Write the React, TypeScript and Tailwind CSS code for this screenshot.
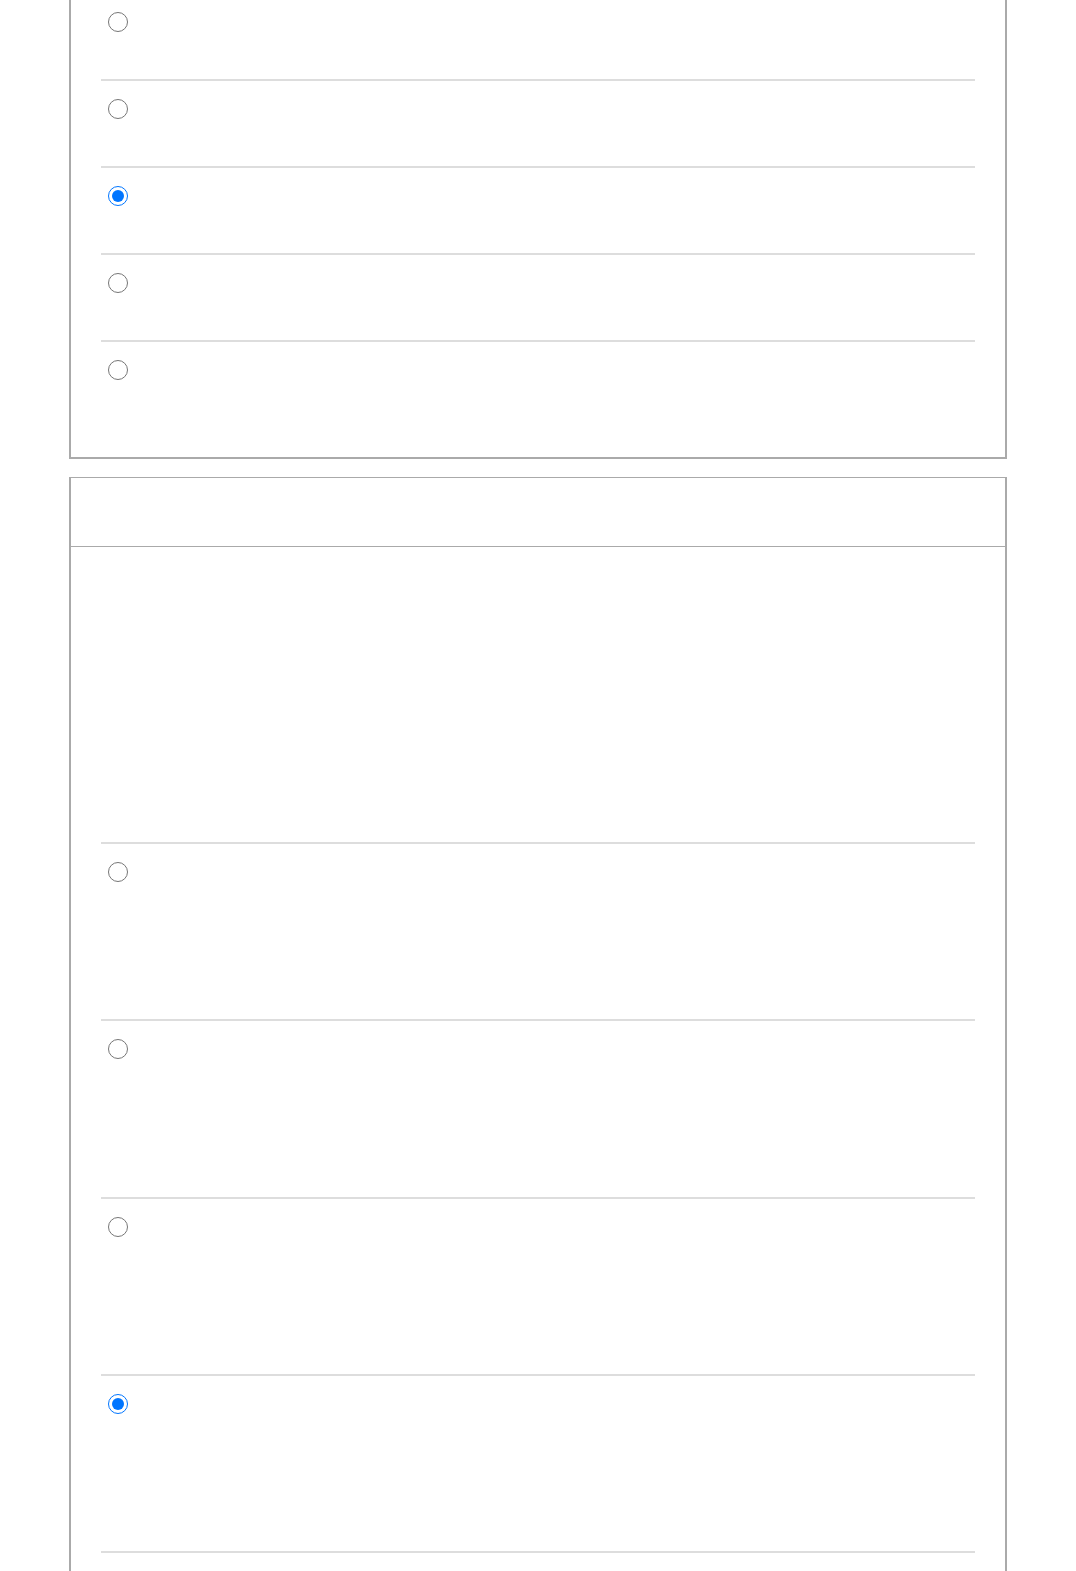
export default function App() {
  const first = [false, false, true, false, false]
  const second = [false, false, false, true, false]

  return (
    <div className="min-h-screen bg-white pb-10" style={{ fontFamily: '"Liberation Sans", Arial, sans-serif' }}>
      {/* Panel 1 (scrolled, top is out of view) */}
      <div className="w-[938px] mx-auto -mt-[8px] border-x-2 border-b-2 border-[#aaaaaa] bg-white px-[30px] pb-[30px]">
        {first.map((checked, i) => (
          <label key={i} className="block h-[87px] border-t-2 border-[#dddddd] pt-[18px] pl-[7px]">
            <input type="radio" name="q1" defaultChecked={checked} className="block w-5 h-5 m-0 accent-[#0075ff]" />
          </label>
        ))}
      </div>

      {/* Panel 2 */}
      <div className="w-[938px] mx-auto mt-[18px] border-x-2 border-t border-[#aaaaaa] bg-white">
        <div className="h-[69px] border-b border-[#aaaaaa]" />
        <div className="px-[30px]">
          <div className="h-[295px]" />
          {second.map((checked, i) => (
            <label key={i} className="block h-[177.25px] border-t-2 border-[#dddddd] pt-[18px] pl-[7px]">
              <input type="radio" name="q2" defaultChecked={checked} className="block w-5 h-5 m-0 accent-[#0075ff]" />
            </label>
          ))}
        </div>
      </div>
    </div>
  )
}
